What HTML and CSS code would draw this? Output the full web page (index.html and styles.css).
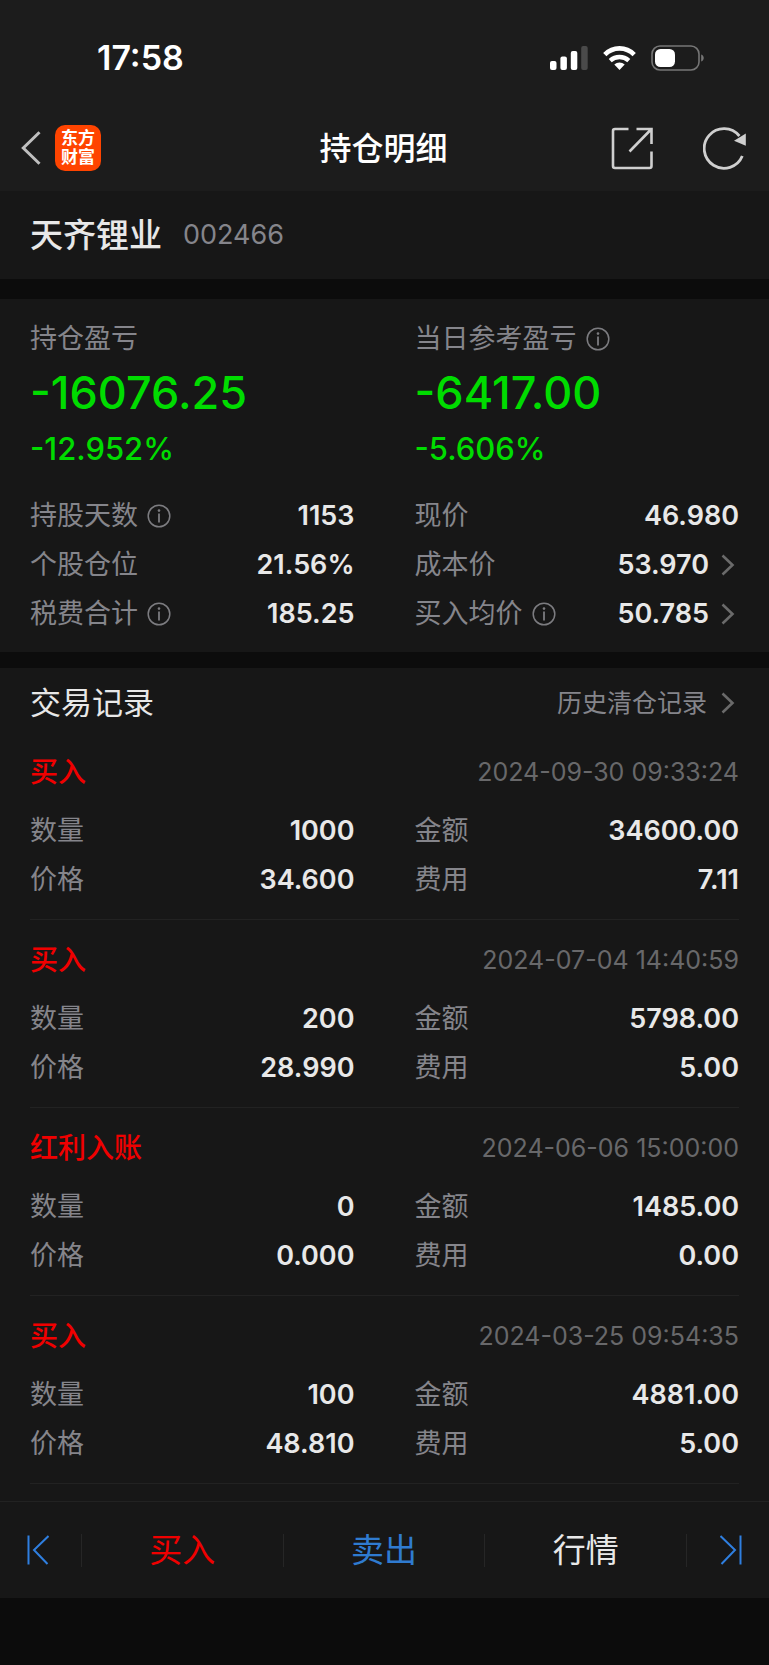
FILE: index.html
```html
<!DOCTYPE html>
<html lang="zh-CN">

<head>
    <meta charset="UTF-8">
    <meta name="viewport" content="width=device-width, initial-scale=1.0">
    <title>持仓明细</title>
    <link rel="stylesheet" href="styles.css">
</head>

<body>
    <header>
        <div class="status-bar">
            <span class="time">17:58</span>
            <div class="status-icons">
                <svg class="signal" width="38" height="24" viewBox="0 0 38 24" fill="#fff">
                    <rect x="0" y="15" width="6.5" height="9" rx="2" />
                    <rect x="10.4" y="10.5" width="6.5" height="13.5" rx="2" />
                    <rect x="20.8" y="5" width="6.5" height="19" rx="2" />
                    <rect x="31.2" y="0" width="6.5" height="24" rx="2" fill="#4a4a4a" />
                </svg>
                <svg class="wifi" width="33" height="24" viewBox="0 0 33 24" fill="none" stroke="#fff">
                    <path d="M1.8 8.6 C10 0.3 23 0.3 31.2 8.6" stroke-width="4.6" />
                    <path d="M7.2 14.6 C12.5 9.8 20.5 9.8 25.8 14.6" stroke-width="4.4" />
                    <path d="M11.3 18.6 C14.3 15.9 18.7 15.9 21.7 18.6 L16.5 24 Z" fill="#fff" stroke="none" />
                </svg>
                <svg class="battery" width="54" height="26" viewBox="0 0 54 26">
                    <rect x="1" y="1" width="47" height="24" rx="8" fill="none" stroke="#767676" stroke-width="1.6" />
                    <rect x="4" y="4" width="20" height="18" rx="5.5" fill="#fff" />
                    <path d="M50.2 9.5 C53.6 10.8 53.6 15.2 50.2 16.5 Z" fill="#767676" />
                </svg>
            </div>
        </div>

        <div class="title-bar">
            <div class="title-left">
                <button class="icon-btn" aria-label="返回">
                    <svg width="20" height="34" viewBox="0 0 20 34" fill="none" stroke="#bfbfbf" stroke-width="3">
                        <path d="M18.5 1.2 L2.3 17 L18.5 32.8" />
                    </svg>
                </button>
                <div class="logo"><span>东方</span><span>财富</span></div>
            </div>
            <h1>持仓明细</h1>
            <div class="title-right">
                <button class="icon-btn" aria-label="分享">
                    <svg width="43" height="43" viewBox="0 0 43 43" fill="none" stroke="#cfcfcf" stroke-width="2.6">
                        <path d="M17.5 2 H4 Q2 2 2 4 V39 Q2 41 4 41 H38.5 Q40.5 41 40.5 39 V24.5" />
                        <path d="M25.5 2 H40.5 V17 M40 2.5 L18.5 24.5" />
                    </svg>
                </button>
                <button class="icon-btn" aria-label="刷新">
                    <svg width="43" height="43" viewBox="0 0 43 43" fill="none" stroke="#cfcfcf" stroke-width="2.8">
                        <path d="M39.3 29 A19.8 19.8 0 1 1 36.4 9" />
                        <path d="M42.8 6.5 V18.8 L31 13.8 Z" fill="#cfcfcf" stroke="none" />
                    </svg>
                </button>
            </div>
        </div>
    </header>

    <main>
        <section class="stock">
            <h2>天齐锂业</h2>
            <span class="code">002466</span>
        </section>

        <section class="summary">
            <div class="column">
                <div class="label">持仓盈亏</div>
                <div class="profit">-16076.25</div>
                <div class="percent">-12.952%</div>
                <div class="row">
                    <span class="label">持股天数
                        <svg class="info" viewBox="0 0 24 24"><use href="#info" /></svg>
                    </span>
                    <span class="value">1153</span>
                </div>
                <div class="row">
                    <span class="label">个股仓位</span>
                    <span class="value">21.56%</span>
                </div>
                <div class="row">
                    <span class="label">税费合计
                        <svg class="info" viewBox="0 0 24 24"><use href="#info" /></svg>
                    </span>
                    <span class="value">185.25</span>
                </div>
            </div>
            <div class="column">
                <div class="label">当日参考盈亏
                    <svg class="info" viewBox="0 0 24 24"><use href="#info" /></svg>
                </div>
                <div class="profit">-6417.00</div>
                <div class="percent">-5.606%</div>
                <div class="row">
                    <span class="label">现价</span>
                    <span class="value">46.980</span>
                </div>
                <a class="row" href="#">
                    <span class="label">成本价</span>
                    <span class="value">53.970
                        <svg class="arrow" viewBox="0 0 14 22"><use href="#arrow" /></svg>
                    </span>
                </a>
                <a class="row" href="#">
                    <span class="label">买入均价
                        <svg class="info" viewBox="0 0 24 24"><use href="#info" /></svg>
                    </span>
                    <span class="value">50.785
                        <svg class="arrow" viewBox="0 0 14 22"><use href="#arrow" /></svg>
                    </span>
                </a>
            </div>
        </section>

        <section class="records">
            <div class="records-head">
                <h2>交易记录</h2>
                <a class="history" href="#">历史清仓记录
                    <svg class="arrow" viewBox="0 0 14 22"><use href="#arrow" /></svg>
                </a>
            </div>

            <article class="record">
                <div class="record-head">
                    <h3>买入</h3>
                    <time>2024-09-30 09:33:24</time>
                </div>
                <div class="record-data">
                    <div class="row"><span class="label">数量</span><span class="value">1000</span></div>
                    <div class="row"><span class="label">金额</span><span class="value">34600.00</span></div>
                    <div class="row"><span class="label">价格</span><span class="value">34.600</span></div>
                    <div class="row"><span class="label">费用</span><span class="value">7.11</span></div>
                </div>
            </article>

            <article class="record">
                <div class="record-head">
                    <h3>买入</h3>
                    <time>2024-07-04 14:40:59</time>
                </div>
                <div class="record-data">
                    <div class="row"><span class="label">数量</span><span class="value">200</span></div>
                    <div class="row"><span class="label">金额</span><span class="value">5798.00</span></div>
                    <div class="row"><span class="label">价格</span><span class="value">28.990</span></div>
                    <div class="row"><span class="label">费用</span><span class="value">5.00</span></div>
                </div>
            </article>

            <article class="record">
                <div class="record-head">
                    <h3>红利入账</h3>
                    <time>2024-06-06 15:00:00</time>
                </div>
                <div class="record-data">
                    <div class="row"><span class="label">数量</span><span class="value">0</span></div>
                    <div class="row"><span class="label">金额</span><span class="value">1485.00</span></div>
                    <div class="row"><span class="label">价格</span><span class="value">0.000</span></div>
                    <div class="row"><span class="label">费用</span><span class="value">0.00</span></div>
                </div>
            </article>

            <article class="record">
                <div class="record-head">
                    <h3>买入</h3>
                    <time>2024-03-25 09:54:35</time>
                </div>
                <div class="record-data">
                    <div class="row"><span class="label">数量</span><span class="value">100</span></div>
                    <div class="row"><span class="label">金额</span><span class="value">4881.00</span></div>
                    <div class="row"><span class="label">价格</span><span class="value">48.810</span></div>
                    <div class="row"><span class="label">费用</span><span class="value">5.00</span></div>
                </div>
            </article>
        </section>
    </main>

    <nav class="bottom-bar">
        <button class="step prev" aria-label="上一只">
            <svg width="22" height="30" viewBox="0 0 22 30" fill="none" stroke="#2f7fe0" stroke-width="2">
                <path d="M1.5 0.5 V29.5 M21.5 1 L7 15 L20.5 29" />
            </svg>
        </button>
        <button class="buy">买入</button>
        <button class="sell">卖出</button>
        <button class="quote">行情</button>
        <button class="step next" aria-label="下一只">
            <svg width="22" height="30" viewBox="0 0 22 30" fill="none" stroke="#2f7fe0" stroke-width="2">
                <path d="M20.5 0.5 V29.5 M0.5 1 L15 15 L1.5 29" />
            </svg>
        </button>
    </nav>

    <!-- shared icons -->
    <svg class="sprite">
        <symbol id="info" viewBox="0 0 24 24">
            <circle cx="12" cy="12" r="10.8" fill="none" stroke="#7c7c80" stroke-width="1.5" />
            <circle cx="12" cy="6.6" r="1.3" fill="#7c7c80" />
            <path d="M12 9.6 V18.6" stroke="#7c7c80" stroke-width="1.8" />
        </symbol>
        <symbol id="arrow" viewBox="0 0 14 22">
            <path d="M1.5 1.5 L11.5 11 L1.5 20.5" fill="none" stroke="#6a6a6a" stroke-width="2.6" />
        </symbol>
    </svg>
</body>

</html>
```
FILE: styles.css
```css
* {
    box-sizing: border-box;
}

body {
    margin: 0;
    background-color: #0c0c0c;
    color: #e8e8e8;
    font-family: Inter, "Noto Sans CJK SC", sans-serif;
    font-size: 27px;
    line-height: 40px;
}

h1, h2, h3 {
    margin: 0;
    font-weight: 500;
}

a {
    color: inherit;
    text-decoration: none;
}

button {
    padding: 0;
    border: none;
    background: none;
    font-family: inherit;
    cursor: pointer;
}

svg {
    display: block;
}

.sprite {
    display: none;
}

/* header */
header {
    background-color: #1c1c1c;
    color: #fff;
    padding-bottom: 10px;
}

.status-bar {
    display: flex;
    justify-content: space-between;
    align-items: center;
    height: 115px;
    padding: 0 64px 0 97px;
}

.time {
    font-size: 34px;
    font-weight: 600;
}

.status-icons {
    display: flex;
    align-items: center;
    gap: 15px;
}

.title-bar {
    display: grid;
    grid-template-columns: 1fr auto 1fr;
    align-items: center;
    height: 66px;
    padding: 0 23px 0 21px;
}

.title-left {
    display: flex;
    align-items: center;
    gap: 14px;
}

.title-right {
    display: flex;
    justify-content: flex-end;
    gap: 49px;
}

.logo {
    display: flex;
    flex-direction: column;
    align-items: center;
    justify-content: center;
    width: 46px;
    height: 46px;
    border-radius: 10px;
    background-color: #ff4400;
    font-size: 17px;
    font-weight: 700;
    line-height: 19px;
}

.title-bar h1 {
    padding-top: 2px;
    font-size: 32px;
}

/* stock name */
.stock {
    display: flex;
    align-items: center;
    gap: 21px;
    height: 88px;
    padding: 0 30px;
    background-color: #171717;
}

.stock h2 {
    font-size: 33px;
}

.code {
    color: #85858b;
}

/* profit summary */
.summary {
    display: grid;
    grid-template-columns: 1fr 1fr;
    gap: 60px;
    margin-top: 20px;
    padding: 20px 30px 14px;
    background-color: #171717;
}

.label {
    display: flex;
    align-items: center;
    gap: 9px;
    color: #85858b;
}

.info {
    width: 24px;
    height: 24px;
}

.arrow {
    width: 14px;
    height: 22px;
}

.profit {
    color: #00dc00;
    font-size: 45px;
    font-weight: 500;
    line-height: 67px;
}

.percent {
    margin-bottom: 19px;
    color: #00dc00;
    font-size: 31px;
    font-weight: 500;
    line-height: 46px;
}

.row {
    display: flex;
    justify-content: space-between;
    align-items: center;
    height: 49px;
}

.value {
    display: flex;
    align-items: center;
    gap: 12px;
    font-weight: 600;
}

.value .arrow,
.history .arrow {
    margin-right: 4px;
}

/* trade records */
.records {
    margin-top: 16px;
    padding: 6px 30px 17px;
    background-color: #171717;
}

.records-head {
    display: flex;
    justify-content: space-between;
    align-items: center;
    height: 58px;
}

.records-head h2 {
    font-size: 31px;
    font-weight: 400;
}

.history {
    display: flex;
    align-items: center;
    gap: 14px;
    color: #85858b;
    font-size: 25px;
}

.record {
    padding: 6px 0 15px;
    border-bottom: 1px solid #222;
}

.record-head {
    display: flex;
    justify-content: space-between;
    align-items: center;
    height: 68px;
}

.record-head h3 {
    color: #f00000;
    font-size: 28px;
}

.record-head time {
    color: #68686a;
    font-size: 25px;
}

.record-data {
    display: grid;
    grid-template-columns: 1fr 1fr;
    column-gap: 60px;
}

/* bottom bar */
.bottom-bar {
    display: flex;
    align-items: center;
    height: 97px;
    border-top: 1px solid #222;
    background-color: #171717;
}

.bottom-bar button {
    flex: 1;
    height: 33px;
    border-right: 1px solid #262626;
    font-size: 33px;
    line-height: 33px;
}

.bottom-bar .step {
    display: flex;
    flex: 0 0 82px;
    align-items: center;
    padding: 0 27px;
}

.bottom-bar .next {
    justify-content: flex-end;
    border-right: none;
}

.bottom-bar .buy {
    color: #f00000;
}

.bottom-bar .sell {
    color: #2f7bd0;
}

.bottom-bar .quote {
    color: #e8e8e8;
}
```
